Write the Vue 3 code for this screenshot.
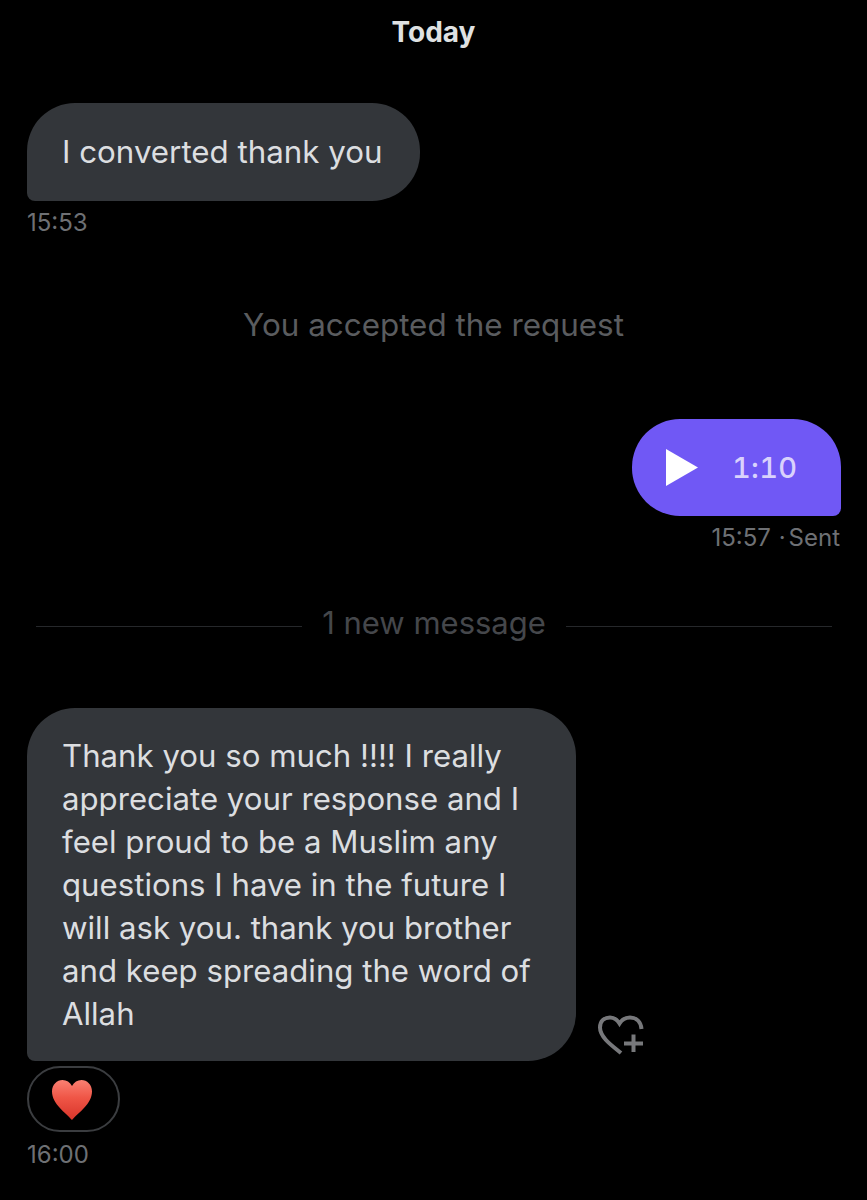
<template>
  <main class="chat">
    <h2 class="day">Today</h2>

    <div class="msg msg-first">
      <div class="bubble">I converted thank you</div>
      <div class="time">15:53</div>
    </div>

    <p class="notice">You accepted the request</p>

    <div class="msg sent">
      <div class="voice">
        <svg class="play" viewBox="0 0 32 37" width="32" height="37"><path d="M0 0L32 18.5L0 37Z" fill="#fff" /></svg>
        <span class="duration">1:10</span>
      </div>
      <div class="time">15:57 <span class="dot">·</span>Sent</div>
    </div>

    <div class="divider">
      <span class="line"></span>
      <span class="divider-text">1 new message</span>
      <span class="line"></span>
    </div>

    <div class="msg msg-last">
      <div class="row">
        <div class="bubble bubble-long">
          <span v-for="line in lines" :key="line" class="text-line">{{ line }}</span>
        </div>
        <svg class="react" viewBox="0 0 46 40" width="46" height="40" fill="none" stroke="#77787b" stroke-width="4">
          <path d="M23 38C16 32 2 23 2 12.500C2 6 6.500 2.500 12 2.500C16 2.500 19 4.500 21.500 8.500C24 4.500 27.500 2.500 32 2.500C38.500 2.500 43 7 43.500 14" />
          <path d="M26 28.500H45M35.500 19.500V37" />
        </svg>
      </div>
      <div class="reaction">
        <svg viewBox="0 0 42 42" width="42" height="42">
          <defs>
            <linearGradient id="heartFill" x1="0" y1="0" x2="0" y2="1">
              <stop offset="0" stop-color="#fa8072" />
              <stop offset="0.45" stop-color="#ef5546" />
              <stop offset="1" stop-color="#d8352a" />
            </linearGradient>
          </defs>
          <path d="M21 41C15 34 1 25 1 12.500C1 5.500 6 1 11.500 1C15.500 1 19 3 21 7C23 3 26.500 1 30.500 1C36 1 41 5.500 41 12.500C41 25 27 34 21 41Z" fill="url(#heartFill)" />
        </svg>
      </div>
      <div class="time">16:00</div>
    </div>
  </main>
</template>

<script setup>
const lines = [
  'Thank you so much !!!! I really',
  'appreciate your response and I',
  'feel proud to be a Muslim any',
  'questions I have in the future I',
  'will ask you. thank you brother',
  'and keep spreading the word of',
  'Allah',
]
</script>

<style scoped>
.chat {
  width: 867px;
  height: 1200px;
  box-sizing: border-box;
  padding: 0 27px;
  overflow: hidden;
  background: #000;
  font-family: Inter, "Liberation Sans", sans-serif;
}

.day {
  margin: 0;
  padding-top: 15px;
  height: 88px;
  box-sizing: border-box;
  line-height: 34px;
  font-size: 28px;
  font-weight: 700;
  color: #dfe1e2;
  text-align: center;
}

.msg-first {
  margin-top: 15px;
}

.bubble {
  display: inline-block;
  padding: 0 37px 0 35px;
  height: 98px;
  line-height: 99px;
  box-sizing: border-box;
  border-radius: 48px 48px 48px 8px;
  background: #33363a;
  color: #dcdee0;
  font-size: 31.300px;
}

.time {
  margin-top: 7px;
  height: 30px;
  line-height: 30px;
  font-size: 24px;
  color: #6e7074;
}

.notice {
  margin: 67px 0 0;
  height: 40px;
  line-height: 40px;
  text-align: center;
  font-size: 31.400px;
  color: #5a5c5f;
}

.sent {
  margin-top: 74px;
  display: flex;
  flex-direction: column;
  align-items: flex-end;
}

.sent .time {
  margin-top: 7px;
}

.dot {
  margin: 0 3px 0 1px;
}

.voice {
  display: flex;
  align-items: center;
  width: 209px;
  height: 97px;
  box-sizing: border-box;
  padding-left: 34px;
  border-radius: 48px 48px 8px 48px;
  background: #7058f5;
  margin-right: -1px;
}

.duration {
  margin-left: 34px;
  font-size: 29px;
  font-weight: 500;
  letter-spacing: 0.300px;
  font-variant-numeric: tabular-nums;
  color: #d9d2fc;
}

.divider {
  margin-top: 50px;
  margin-left: 9px;
  width: 796px;
  display: flex;
  align-items: center;
  gap: 20px;
}

.line {
  flex: 1;
  height: 1px;
  margin-top: 6px;
  background: #26282b;
}

.divider-text {
  line-height: 40px;
  font-size: 31px;
  color: #45474b;
}

.msg-last {
  margin-top: 65px;
}

.row {
  display: flex;
  align-items: flex-end;
  gap: 22px;
}

.bubble-long {
  display: block;
  width: 549px;
  height: 353px;
  padding: 27px 0 0 35px;
  line-height: 43px;
  font-size: 31.200px;
}

.text-line {
  display: block;
  white-space: nowrap;
}

.react {
  margin-bottom: 6px;
}

.reaction {
  display: flex;
  align-items: center;
  justify-content: center;
  width: 93px;
  height: 66px;
  margin-top: 5px;
  box-sizing: border-box;
  padding: 1px 3px 0 0;
  border: 2px solid #3b3d40;
  border-radius: 33px;
}

.msg-last .time {
  margin-top: 8px;
}
</style>

<style>
html,
body {
  background: #000;
}
</style>
